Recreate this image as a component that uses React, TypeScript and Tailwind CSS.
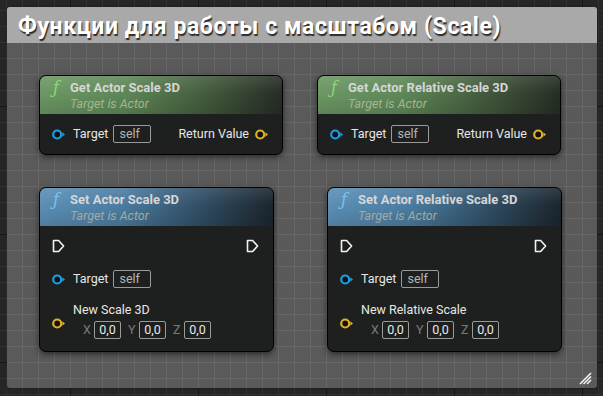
import React from "react";

const BLUE = "#1aa0e6";
const YELLOW = "#e2b020";

function DataPin({ color }: { color: string }) {
  return (
    <svg width="13" height="11" viewBox="0 0 13 11" className="shrink-0">
      <circle cx="5.2" cy="5.5" r="4" fill="#121212" stroke={color} strokeWidth="2.2" />
      <path d="M10.4 3.3 L13 5.5 L10.4 7.7 Z" fill={color} />
    </svg>
  );
}

function ExecPin() {
  return (
    <svg width="13" height="14" viewBox="0 0 13 14" className="shrink-0">
      <path
        d="M1.5 1.5 H6.6 L11.6 7 L6.6 12.5 H1.5 Z"
        fill="none"
        stroke="#f2f2f2"
        strokeWidth="1.6"
        strokeLinejoin="round"
      />
    </svg>
  );
}

function ValueBox({ text, w }: { text: string; w: string }) {
  return (
    <div
      className={`${w} h-[18px] border border-[#9a9a9a] rounded-[2px] flex items-center text-[12.5px] leading-none`}
    >
      {text}
    </div>
  );
}

function Header({
  title,
  variant,
}: {
  title: string;
  variant: "green" | "blue";
}) {
  const bg =
    variant === "green"
      ? "bg-[linear-gradient(to_right,#6c9864_0%,#5e8857_35%,#42593c_70%,#262d25_100%)]"
      : "bg-[linear-gradient(to_right,#5c8fb6_0%,#4c7ca0_35%,#2f4d63_70%,#1c252d_100%)]";
  const fColor = variant === "green" ? "text-[#8fd67c]" : "text-[#7cc0ec]";
  const subColor = variant === "green" ? "text-[#a3b592]" : "text-[#9eaca6]";
  return (
    <div className={`relative h-[38px] shrink-0 ${bg}`}>
      <div className="absolute inset-0 bg-[linear-gradient(to_bottom,rgba(255,255,255,0.10),rgba(255,255,255,0)_45%,rgba(0,0,0,0.12))]" />
      <div className="relative pl-[13px] pt-[4px]">
        <div className="flex items-center h-4">
          <span
            className={`w-[17px] text-[16px] leading-4 italic font-['DejaVu_Serif',serif] ${fColor}`}
          >
            ƒ
          </span>
          <span className="text-[13px] leading-4 font-bold text-[#d6d6d6]">
            {title}
          </span>
        </div>
        <div className={`pl-[17px] h-4 text-[12.5px] leading-4 italic ${subColor}`}>
          Target is Actor
        </div>
      </div>
    </div>
  );
}

function GetNode({ left, title }: { left: string; title: string }) {
  return (
    <div
      className={`absolute ${left} top-[68px] w-[244px] h-[80px] rounded-[7px] border border-black bg-[#1e201f] shadow-[0_2px_6px_rgba(0,0,0,0.55)] overflow-hidden flex flex-col`}
    >
      <Header title={title} variant="green" />
      <div className="flex-1 flex items-center justify-between pl-[12px] pr-[14px]">
        <div className="flex items-center">
          <DataPin color={BLUE} />
          <span className="ml-[8px] text-[12.5px] text-[#e6e6e6]">Target</span>
          <div className="ml-[5px] text-[#b4b4b4]">
            <ValueBox text="self" w="w-[38px] pl-[5px]" />
          </div>
        </div>
        <div className="flex items-center">
          <span className="text-[12.5px] text-[#e6e6e6]">Return Value</span>
          <span className="ml-[6px]">
            <DataPin color={YELLOW} />
          </span>
        </div>
      </div>
    </div>
  );
}

function SetNode({
  left,
  title,
  vecLabel,
}: {
  left: string;
  title: string;
  vecLabel: string;
}) {
  return (
    <div
      className={`absolute ${left} top-[180px] w-[235px] h-[165px] rounded-[7px] border border-black bg-[#1e201f] shadow-[0_2px_6px_rgba(0,0,0,0.55)] overflow-hidden flex flex-col`}
    >
      <Header title={title} variant="blue" />
      <div className="flex flex-col pl-[12px] pr-[14px] pt-[10px]">
        <div className="h-[20px] flex items-center justify-between">
          <ExecPin />
          <ExecPin />
        </div>
        <div className="mt-[14px] h-[18px] flex items-center">
          <DataPin color={BLUE} />
          <span className="ml-[8px] text-[12.5px] text-[#e6e6e6]">Target</span>
          <div className="ml-[5px] text-[#b4b4b4]">
            <ValueBox text="self" w="w-[38px] pl-[5px]" />
          </div>
        </div>
        <div className="mt-[14px] flex items-center">
          <span className="mt-[5px]">
            <DataPin color={YELLOW} />
          </span>
          <div className="ml-[8px] flex flex-col">
            <div className="h-4 text-[12.5px] leading-4 text-[#e6e6e6]">
              {vecLabel}
            </div>
            <div className="mt-[3px] pl-[10px] h-[18px] flex items-center gap-[7px] text-[12.5px]">
              {["X", "Y", "Z"].map((a) => (
                <div key={a} className="flex items-center gap-[3px]">
                  <span className="text-[#7a7a7a] w-[8px]">{a}</span>
                  <div className="text-[#e8e8e8]">
                    <ValueBox text="0,0" w="w-[27px] justify-center" />
                  </div>
                </div>
              ))}
            </div>
          </div>
        </div>
      </div>
    </div>
  );
}

export default function App() {
  return (
    <div
      className={`relative w-[603px] h-[396px] overflow-hidden font-['Roboto',sans-serif] bg-[#262626] bg-[linear-gradient(to_right,#161616_1px,transparent_1px),linear-gradient(to_bottom,#161616_1px,transparent_1px),linear-gradient(to_right,#313131_1px,transparent_1px),linear-gradient(to_bottom,#313131_1px,transparent_1px)] bg-[size:128px_128px,128px_128px,16px_16px,16px_16px] bg-[position:70px_106px,70px_106px,6px_10px,6px_10px]`}
    >
      <div className="absolute left-[7px] top-[7px] w-[590px] h-[381px] rounded-[3px] bg-[#5a5a5a] bg-[linear-gradient(to_right,#676767_1px,transparent_1px),linear-gradient(to_bottom,#676767_1px,transparent_1px)] bg-[size:16px_16px] bg-[position:15px_3px] shadow-[0_0_2px_rgba(0,0,0,0.5)]">
        <div className="h-[36px] bg-[#a9a9a9] flex items-center pl-[11px] rounded-t-[3px]">
          <span className="text-[23px] tracking-[0.6px] font-bold text-white leading-none mt-[2px] [text-shadow:1px_2px_1px_rgba(0,0,0,0.75)]">
            Функции для работы с масштабом (Scale)
          </span>
        </div>

        <GetNode left="left-[32px]" title="Get Actor Scale 3D" />
        <GetNode left="left-[310px]" title="Get Actor Relative Scale 3D" />
        <SetNode
          left="left-[32px]"
          title="Set Actor Scale 3D"
          vecLabel="New Scale 3D"
        />
        <SetNode
          left="left-[320px]"
          title="Set Actor Relative Scale 3D"
          vecLabel="New Relative Scale"
        />

        <svg
          className="absolute right-[5px] bottom-[3px]"
          width="13"
          height="13"
          viewBox="0 0 13 13"
        >
          <path
            d="M1 12 L12 1 M4.5 12 L12 4.5 M8 12 L12 8"
            stroke="#f0f0f0"
            strokeWidth="1.6"
          />
        </svg>
      </div>
    </div>
  );
}
